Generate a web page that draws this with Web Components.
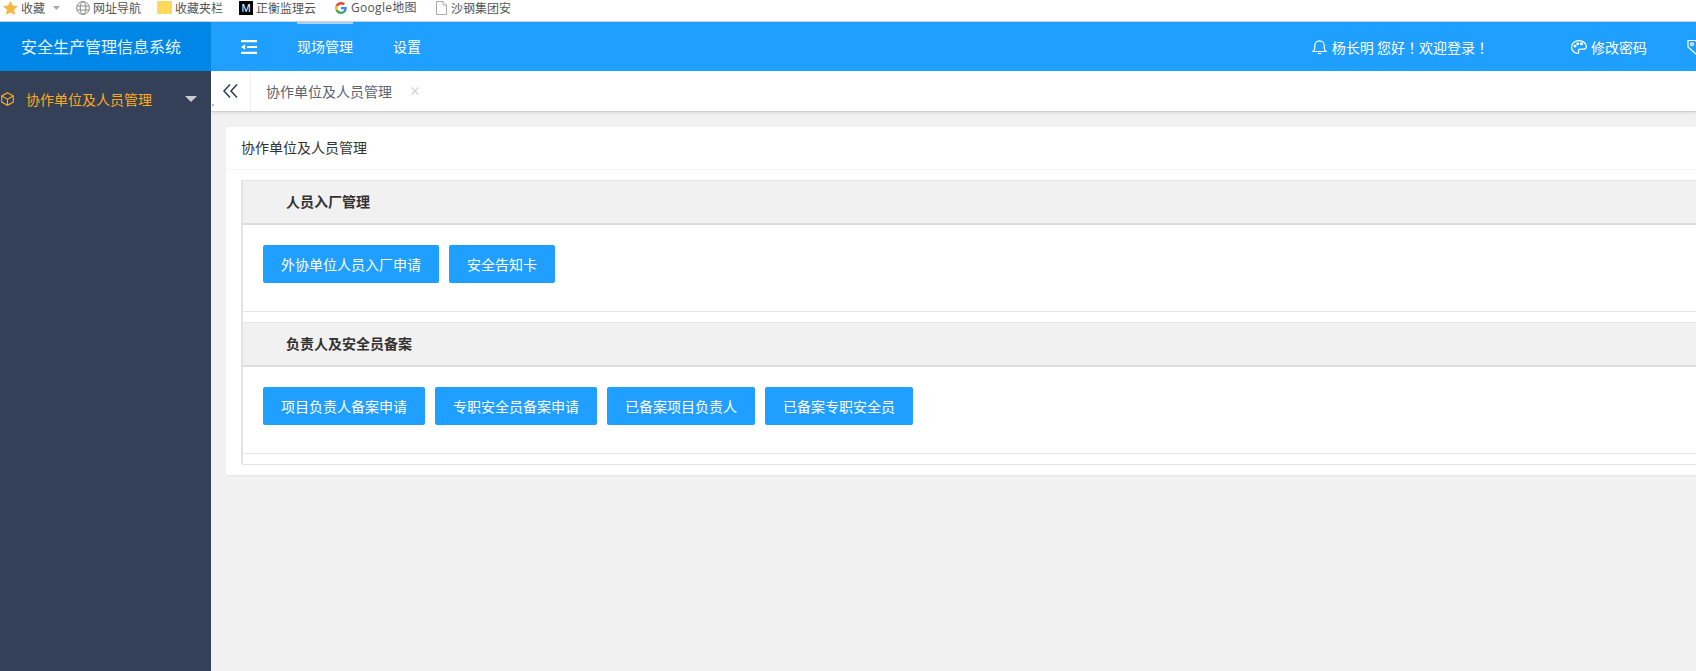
<!DOCTYPE html>
<html lang="zh-CN">
<head>
<meta charset="utf-8">
<title>安全生产管理信息系统</title>
<style>
  html, body {
    margin: 0;
    height: 100%;
    overflow: hidden;
    background: #f1f1f1;
    font-family: "Noto Sans CJK SC", "Liberation Sans", sans-serif;
    font-size: 14px;
  }
  .page-body {
    display: flex;
    height: calc(100vh - 71px);
  }
  .page-main {
    flex: 1;
    min-width: 0;
    overflow: hidden;
    display: flex;
    flex-direction: column;
  }
</style>
</head>
<body>
  <browser-bar></browser-bar>
  <top-header></top-header>
  <div class="page-body">
    <side-menu></side-menu>
    <div class="page-main">
      <tab-bar></tab-bar>
      <panel-card heading="协作单位及人员管理">
        <section-box heading="人员入厂管理">
          <action-button>外协单位人员入厂申请</action-button>
          <action-button>安全告知卡</action-button>
        </section-box>
        <section-box heading="负责人及安全员备案">
          <action-button>项目负责人备案申请</action-button>
          <action-button>专职安全员备案申请</action-button>
          <action-button>已备案项目负责人</action-button>
          <action-button>已备案专职安全员</action-button>
        </section-box>
      </panel-card>
    </div>
  </div>

<script>
class BrowserBar extends HTMLElement {
  constructor () {
    super();
    this.attachShadow({ mode: "open" });
  }

  connectedCallback () {
    this.shadowRoot.innerHTML = /* html */ `
    <style>
      :host {
        display: flex;
        align-items: center;
        height: 21px;
        box-sizing: content-box;
        padding-left: 3px;
        background: #fff;
        border-bottom: 1px solid #c9d3da;
        color: #555;
        font-size: 12px;
        line-height: 21px;
      }
      .item { display: flex; align-items: center; margin-top: -6px; }
      svg { display: block; flex: none; }
      .m {
        width: 14px;
        height: 14px;
        margin-right: 3px;
        background: #000;
        color: #fff;
        font: 11px/14px "Liberation Sans", sans-serif;
        text-align: center;
      }
    </style>
    <div class="item" style="width:73px">
      <svg width="15" height="14" viewBox="0 0 15 14" style="margin-right:3px"><path d="M7.500 0l2.200 4.600 5 .7-3.600 3.500.9 5-4.500-2.400-4.500 2.400.9-5L0 5.300l5-.7z" fill="#f5b942"/></svg>
      <span>收藏</span>
      <svg width="7" height="4" viewBox="0 0 7 4" style="margin-left:8px"><path d="M0 0h7L3.500 4z" fill="#aaa"/></svg>
    </div>
    <div class="item" style="width:81px">
      <svg width="14" height="14" viewBox="0 0 14 14" fill="none" stroke="#888" style="margin-right:3px"><circle cx="7" cy="7" r="6.400"/><ellipse cx="7" cy="7" rx="2.800" ry="6.400"/><path d="M1 5h12M1 9h12"/></svg>
      <span>网址导航</span>
    </div>
    <div class="item" style="width:82px">
      <svg width="15" height="13" viewBox="0 0 15 13" style="margin-right:3px"><rect width="15" height="13" rx="1" fill="#fdd85d"/></svg>
      <span>收藏夹栏</span>
    </div>
    <div class="item" style="width:96px">
      <span class="m">M</span>
      <span>正衡监理云</span>
    </div>
    <div class="item" style="width:101px">
      <svg width="12" height="12" viewBox="0 0 48 48" style="margin-right:4px"><path fill="#EA4335" d="M24 9.500c3.500 0 6.700 1.200 9.200 3.600l6.900-6.900C35.900 2.400 30.500 0 24 0 14.600 0 6.500 5.400 2.600 13.200l8 6.200C12.400 13.700 17.700 9.500 24 9.500z"/><path fill="#4285F4" d="M47 24.500c0-1.600-.1-3.100-.4-4.500H24v9h12.900c-.6 3-2.200 5.500-4.800 7.200l7.700 6C44.300 38 47 31.800 47 24.500z"/><path fill="#FBBC05" d="M10.500 28.600c-.5-1.400-.8-3-.8-4.600s.3-3.200.8-4.600l-8-6.200C.9 16.500 0 20.100 0 24s.9 7.500 2.600 10.800z"/><path fill="#34A853" d="M24 48c6.500 0 11.900-2.100 15.900-5.800l-7.700-6c-2.200 1.400-4.900 2.300-8.100 2.300-6.300 0-11.600-4.200-13.500-9.900l-8 6.200C6.500 42.600 14.600 48 24 48z"/></svg>
      <span style="font-family:'Open Sans','Noto Sans CJK SC',sans-serif;letter-spacing:.3px">Google地图</span>
    </div>
    <div class="item">
      <svg width="11" height="14" viewBox="0 0 11 14" fill="#fff" stroke="#aaa" style="margin-right:4px"><path d="M.5.500h6.500l3.500 3.500v9.500h-10z"/><path d="M7 .5V4h3.500"/></svg>
      <span>沙钢集团安</span>
    </div>
    `;
  }
}

class TopHeader extends HTMLElement {
  constructor () {
    super();
    this.attachShadow({ mode: "open" });
  }

  connectedCallback () {
    this.shadowRoot.innerHTML = /* html */ `
    <style>
      :host {
        display: flex;
        align-items: stretch;
        height: 49px;
        background: #1f9fff;
        color: #fff;
        font-size: 14px;
        overflow: hidden;
      }
      .logo {
        flex: none;
        width: 211px;
        box-sizing: border-box;
        padding-left: 21px;
        background: #0086e6;
        font-size: 16px;
        line-height: 49px;
        color: #e4f3ff;
      }
      .toggle { display: flex; align-items: center; margin-left: 30px; margin-right: 40px; }
      .nav { padding: 0; margin: 0 40px 0 0; line-height: 49px; position: relative; }
      .nav.active::before {
        content: "";
        position: absolute;
        left: 0;
        right: 0;
        top: 0;
        height: 2px;
        background: #a9d3ef;
      }
      .spacer { flex: 1; }
      .info { display: flex; align-items: center; }
      .punct { font-family: "Noto Sans CJK TC", sans-serif; font-style: normal; }
      svg { display: block; flex: none; }
    </style>
    <div class="logo">安全生产管理信息系统</div>
    <div class="toggle">
      <svg width="16" height="14" viewBox="0 0 16 14" fill="#fff"><path d="M0 0h16v2.200H0zM6 5.900h10v2.200H6zM0 11.800h16V14H0zM4.200 4.200v5.600L0 7z"/></svg>
    </div>
    <div class="nav active">现场管理</div>
    <div class="nav">设置</div>
    <div class="spacer"></div>
    <div class="info" style="margin-right:82px">
      <svg width="15" height="16" viewBox="0 0 15 16" fill="none" stroke="#fff" stroke-width="1.200" style="margin-right:5px"><path d="M1 12.500c1.300-1 1.800-2 1.800-3.800V6.500a4.700 4.700 0 019.400 0v2.200c0 1.800.5 2.800 1.800 3.800z"/><path d="M5.700 14.500h3.600"/></svg>
      <span>杨长明 您好<i class="punct" lang="zh-TW">！</i>欢迎登录<i class="punct" lang="zh-TW">！</i></span>
    </div>
    <div class="info" style="margin-right:40px">
      <svg width="16" height="14" viewBox="0 0 16 14" fill="none" stroke="#fff" stroke-width="1.200" style="margin-right:4px"><path d="M8 .7C3.800.7.600 3.400.600 7c0 3.500 2.900 6.300 5.900 6.300 1.300 0 1.600-1 1.100-2-.5-1.200.2-2.100 1.500-2.100h3.300c1.900 0 3-1 3-2.500C15.400 3.300 12.300.7 8 .7z"/><circle cx="4" cy="6" r=".9" fill="#fff"/><circle cx="6.800" cy="3.800" r=".9" fill="#fff"/><circle cx="10.500" cy="3.800" r=".9" fill="#fff"/></svg>
      <span>修改密码</span>
    </div>
    <div class="info" style="margin-right:-7px">
      <svg width="16" height="16" viewBox="0 0 16 16" fill="none" stroke="#fff" stroke-width="1.200"><path d="M1 1.500h7.500l6.500 7-6 6.500L1 8z"/><circle cx="5" cy="5.200" r="1.400"/></svg>
    </div>
    `;
  }
}

class SideMenu extends HTMLElement {
  constructor () {
    super();
    this.attachShadow({ mode: "open" });
  }

  connectedCallback () {
    this.shadowRoot.innerHTML = /* html */ `
    <style>
      :host {
        display: block;
        flex: none;
        width: 211px;
        background: #344058;
      }
      .row {
        display: flex;
        align-items: center;
        height: 56px;
        padding-left: 1px;
        color: #ffa81e;
        font-size: 14px;
      }
      span { margin-left: 12px; }
      svg { display: block; flex: none; }
      .arrow {
        margin-left: 33px;
        width: 0;
        height: 0;
        border-left: 6px solid transparent;
        border-right: 6px solid transparent;
        border-top: 6px solid #c9ccd3;
      }
    </style>
    <div class="row">
      <svg width="13" height="14" viewBox="0 0 13 14" fill="none" stroke="#ffa81e" stroke-width="1.100"><path d="M6.500.7l5.800 3.200v6.200l-5.800 3.200L.7 10.100V3.900zM.7 3.900l5.800 3.300 5.800-3.300M6.500 7.200v6.100"/></svg>
      <span>协作单位及人员管理</span>
      <div class="arrow"></div>
    </div>
    `;
  }
}

class TabBar extends HTMLElement {
  constructor () {
    super();
    this.attachShadow({ mode: "open" });
  }

  connectedCallback () {
    this.shadowRoot.innerHTML = /* html */ `
    <style>
      :host {
        display: flex;
        flex: none;
        align-items: stretch;
        position: relative;
        height: 40px;
        background: #fff;
        border-bottom: 1px solid #d0d0d0;
        box-shadow: 0 1px 3px rgba(0, 0, 0, .1);
        color: #5c6470;
        font-size: 14px;
      }
      .collapse {
        display: flex;
        align-items: center;
        justify-content: center;
        width: 40px;
        box-sizing: border-box;
        border-right: 1px solid #f0f0f0;
      }
      .tab { display: flex; align-items: center; padding-left: 15px; }
      .close { margin-left: 19px; }
      .dot { position: absolute; left: 1px; top: 33px; width: 2px; height: 2px; background: #bbb; }
      svg { display: block; }
    </style>
    <div class="collapse">
      <svg width="15" height="14" viewBox="0 0 15 14" fill="none" stroke="#2d3c55" stroke-width="1.500"><path d="M7 .5L1 7l6 6.500M14 .5L8 7l6 6.500"/></svg>
    </div>
    <div class="tab">
      <span>协作单位及人员管理</span>
      <svg class="close" width="8" height="8" viewBox="0 0 8 8" stroke="#cfd2d6" stroke-width="1.100"><path d="M.5.500l7 7M7.500.5l-7 7"/></svg>
    </div>
    <div class="dot"></div>
    `;
  }
}

class PanelCard extends HTMLElement {
  constructor () {
    super();
    this.attachShadow({ mode: "open" });
  }

  connectedCallback () {
    this.shadowRoot.innerHTML = /* html */ `
    <style>
      :host {
        display: block;
        flex: none;
        margin: 15px -40px 0 15px;
        background: #fff;
        border-radius: 2px;
        box-shadow: 0 1px 2px rgba(0, 0, 0, .05);
        color: #333;
      }
      .title {
        height: 42px;
        padding-left: 15px;
        line-height: 40px;
        border-bottom: 1px solid #f4f4f4;
        box-sizing: content-box;
      }
      .content { padding: 10px 15px 10px; }
      .box { border: 1px solid #e3e3e3; border-left-width: 2px; padding-bottom: 10px; border-radius: 2px; }
    </style>
    <div class="title"></div>
    <div class="content"><div class="box"><slot></slot></div></div>
    `;
    this.shadowRoot.querySelector('.title').textContent = this.getAttribute('heading') || '';
  }
}

class SectionBox extends HTMLElement {
  constructor () {
    super();
    this.attachShadow({ mode: "open" });
  }

  connectedCallback () {
    this.shadowRoot.innerHTML = /* html */ `
    <style>
      :host {
        display: block;
        border-bottom: 1px solid #e6e6e6;
      }
      :host(:not(:last-child)) { margin-bottom: 10px; }
      .head {
        height: 42px;
        padding-left: 43px;
        line-height: 41px;
        background: #f1f1f1;
        border-bottom: 2px solid #dcdcdc;
        color: #333;
        font-weight: bold;
      }
      .body {
        display: flex;
        gap: 10px;
        padding: 20px 20px 28px;
      }
      :host(:not(:first-child)) .head { border-top: 1px solid #e6e6e6; }
    </style>
    <div class="head"></div>
    <div class="body"><slot></slot></div>
    `;
    this.shadowRoot.querySelector('.head').textContent = this.getAttribute('heading') || '';
  }
}

class ActionButton extends HTMLElement {
  constructor () {
    super();
    this.attachShadow({ mode: "open" });
  }

  connectedCallback () {
    this.shadowRoot.innerHTML = /* html */ `
    <style>
      :host {
        display: block;
        height: 38px;
        padding: 0 18px;
        background: #1f9fff;
        border-radius: 2px;
        color: #fff;
        font-size: 14px;
        line-height: 38px;
        white-space: nowrap;
      }
    </style>
    <slot></slot>
    `;
  }
}

customElements.define("browser-bar", BrowserBar);
customElements.define("top-header", TopHeader);
customElements.define("side-menu", SideMenu);
customElements.define("tab-bar", TabBar);
customElements.define("panel-card", PanelCard);
customElements.define("section-box", SectionBox);
customElements.define("action-button", ActionButton);
</script>
</body>
</html>
